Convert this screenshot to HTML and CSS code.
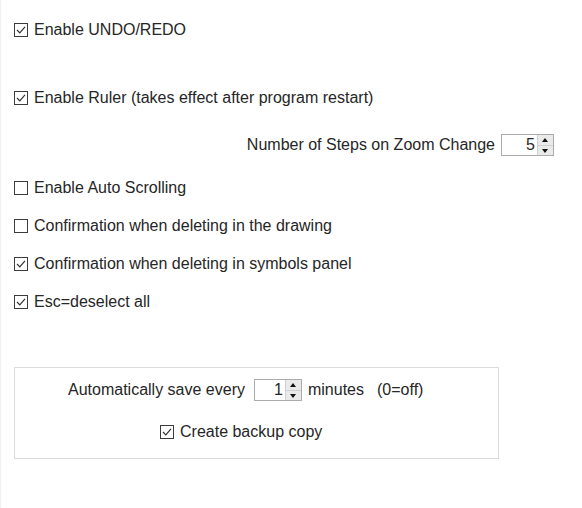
FILE: index.html
```html
<!DOCTYPE html>
<html lang="en">
<head>
<meta charset="utf-8" />
<title>Options</title>
<link rel="stylesheet" href="styles.css">
</head>
<body class="page">
	<div class="options">
		<label class="row">
			<span class="check on"><svg viewBox="0 0 12 12"><path d="M2 6 L4.8 8.8 L10 2.8" /></svg></span>
			<span>Enable UNDO/REDO</span>
		</label>
		<label class="row gapBig">
			<span class="check on"><svg viewBox="0 0 12 12"><path d="M2 6 L4.8 8.8 L10 2.8" /></svg></span>
			<span>Enable Ruler (takes effect after program restart)</span>
		</label>
		<div class="row right gapMid">
			<span>Number of Steps on Zoom Change</span>
			<span class="spin wide">
				<span class="spin-value">5</span>
				<span class="spin-buttons">
					<span class="spin-up"></span>
					<span class="spin-down"></span>
				</span>
			</span>
		</div>
		<label class="row gapAfterSpin">
			<span class="check"></span>
			<span>Enable Auto Scrolling</span>
		</label>
		<label class="row gap">
			<span class="check"></span>
			<span>Confirmation when deleting in the drawing</span>
		</label>
		<label class="row gap">
			<span class="check on"><svg viewBox="0 0 12 12"><path d="M2 6 L4.8 8.8 L10 2.8" /></svg></span>
			<span>Confirmation when deleting in symbols panel</span>
		</label>
		<label class="row gap">
			<span class="check on"><svg viewBox="0 0 12 12"><path d="M2 6 L4.8 8.8 L10 2.8" /></svg></span>
			<span>Esc=deselect all</span>
		</label>

		<div class="group">
			<div class="row autosave">
				<span>Automatically save every</span>
				<span class="spin narrow">
					<span class="spin-value">1</span>
					<span class="spin-buttons">
						<span class="spin-up"></span>
						<span class="spin-down"></span>
					</span>
				</span>
				<span class="minutes">minutes</span>
				<span class="off">(0=off)</span>
			</div>
			<label class="row backup">
				<span class="check on"><svg viewBox="0 0 12 12"><path d="M2 6 L4.8 8.8 L10 2.8" /></svg></span>
				<span>Create backup copy</span>
			</label>
		</div>
	</div>
</body>
</html>
```

FILE: styles.css
```css
html {
	width: 100%;
	height: 100%;
}

.page {
	margin: 0;
	height: 100%;
	background-color: #FFFFFF;
	border-left: 1px solid #F0F0F0;
	box-sizing: border-box;
	font-family: "Liberation Sans", Arial, sans-serif;
	font-size: 16px;
	color: #262626;
}

.options {
	padding: 20px 28px 0 13px;
}

.row {
	display: flex;
	align-items: center;
	height: 20px;
	white-space: nowrap;
}

.gap {
	margin-top: 18px;
}

.gapBig {
	margin-top: 48px;
}

.gapMid {
	margin-top: 25px;
	height: 24px;
}

.gapAfterSpin {
	margin-top: 21px;
}

.right {
	justify-content: flex-end;
}

.check {
	width: 14px;
	height: 14px;
	border: 1px solid #3C3C3C;
	box-sizing: border-box;
	margin-right: 6px;
	flex: none;
	display: flex;
}

.check svg {
	width: 12px;
	height: 12px;
}

.check path {
	fill: none;
	stroke: #333333;
	stroke-width: 1.2;
}

.spin {
	display: flex;
	height: 22px;
	border: 1px solid #ABABAB;
	box-sizing: border-box;
	margin-left: 6px;
	background: #FFFFFF;
}

.spin.wide {
	width: 53px;
}

.spin.narrow {
	width: 48px;
	margin-left: 9px;
}

.spin-value {
	flex: 1;
	text-align: right;
	line-height: 20px;
	padding-right: 2px;
}

.spin-buttons {
	width: 15px;
	display: flex;
	flex-direction: column;
	border-left: 1px solid #D0D0D0;
	background: #EAEAEA;
}

.spin-up,
.spin-down {
	flex: 1;
	position: relative;
}

.spin-up {
	border-bottom: 1px solid #D0D0D0;
}

.spin-up::after,
.spin-down::after {
	content: "";
	position: absolute;
	left: 4px;
	border-left: 3px solid transparent;
	border-right: 3px solid transparent;
}

.spin-up::after {
	top: 3px;
	border-bottom: 4px solid #111111;
}

.spin-down::after {
	top: 3px;
	border-top: 4px solid #111111;
}

.group {
	margin-top: 55px;
	width: 485px;
	height: 92px;
	border: 1px solid #DCDCDC;
	box-sizing: border-box;
	padding-top: 11px;
}

.autosave {
	padding-left: 53px;
	height: 22px;
}

.minutes {
	margin-left: 6px;
}

.off {
	margin-left: 13px;
}

.backup {
	margin-top: 21px;
	padding-left: 145px;
}
```
